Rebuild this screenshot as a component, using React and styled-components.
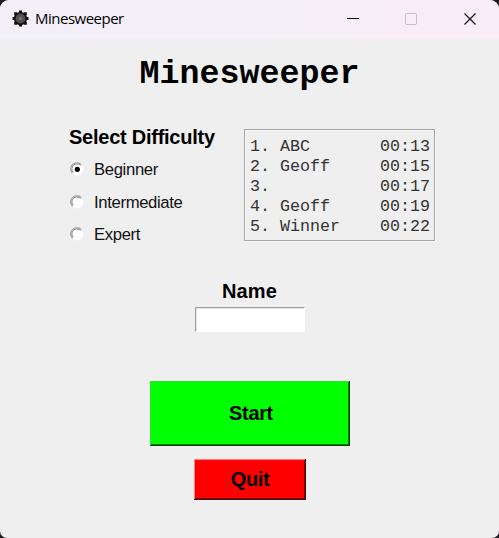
import React, { useState } from "react";
import styled, { createGlobalStyle } from "styled-components";

const GlobalStyle = createGlobalStyle`
  * { box-sizing: border-box; }
  body { margin: 0; background: #1c1a1c; overflow: hidden; }
`;

const Window = styled.div`
  width: 499px;
  height: 538px;
  display: flex;
  flex-direction: column;
  background: #efefef;
  border-radius: 9px 9px 7px 7px;
  overflow: hidden;
  color: #000;
  font-family: "Liberation Sans", Arial, sans-serif;
  font-variant-ligatures: none;
`;

const TitleBar = styled.header`
  height: 38px;
  flex: none;
  display: flex;
  align-items: center;
  padding-left: 12px;
  background: linear-gradient(100deg, #f3eff8 0%, #f4eff8 55%, #f8edf6 78%, #f8edf6 100%);
`;

const IconSlot = styled.div`
  display: flex;
  padding-bottom: 2px;
`;

const Caption = styled.span`
  flex: 1;
  margin-left: 6px;
  padding-bottom: 2px;
  font: 15px/20px "Open Sans", "Noto Sans", sans-serif;
  letter-spacing: -0.5px;
`;

const Controls = styled.div`
  display: flex;
  height: 100%;
`;

const Control = styled.div`
  width: 58.5px;
  display: grid;
  place-items: center;
`;

const Content = styled.main`
  flex: 1;
  display: flex;
  flex-direction: column;
  align-items: center;
`;

const Heading = styled.h1`
  margin: 16px 0 0;
  height: 40px;
  font: bold 33.33px/40px "Liberation Mono", "Courier New", monospace;
`;

const Columns = styled.div`
  width: 100%;
  display: flex;
  align-items: flex-start;
  padding-left: 69px;
  margin-top: 31px;
`;

const Difficulty = styled.div`
  width: 175px;
`;

const Label = styled.div`
  font-size: 20px;
  line-height: 24px;
  font-weight: bold;
  white-space: nowrap;
  letter-spacing: ${(p) => p.$spacing || "-0.25px"};
`;

const Options = styled.div`
  padding-top: 4.5px;
`;

const Option = styled.div`
  height: 32.5px;
  display: flex;
  align-items: center;
  gap: 8px;
  font-size: 16.67px;
  letter-spacing: -0.34px;
  color: #111;
`;

const OptionText = styled.span`
  padding-top: 1px;
`;

const Scores = styled.div`
  width: 191px;
  height: 112px;
  margin-top: 4px;
  padding: 7px 0 0 4px;
  border: 1px solid #a6a6a6;
  box-shadow: inset 1px 1px #fafafa, 1px 1px #fafafa;
`;

const ScoreRow = styled.div`
  display: grid;
  grid-template-columns: 30px 100px 50px;
  height: 20px;
  padding-left: 1px;
  font: 16.67px/20px "Liberation Mono", "Courier New", monospace;
  color: #333;
`;

const NameField = styled.div`
  display: flex;
  flex-direction: column;
  align-items: center;
  margin-top: 27.5px;
`;

const Input = styled.input`
  width: 110px;
  height: 25px;
  margin-top: 4px;
  padding: 0 3px;
  border: 1px solid;
  border-color: #a0a0a0 #fff #fff #a0a0a0;
  box-shadow: inset 1px 1px #e3e3e3;
  border-radius: 0;
  background: #fff;
  outline: none;
  font-size: 16px;
`;

const Button = styled.button`
  width: ${(p) => p.$width}px;
  height: ${(p) => p.$height}px;
  margin: ${(p) => p.$top}px 0 0 ${(p) => p.$left || 0}px;
  padding: 0 ${(p) => p.$padRight || 0}px 0 2px;
  border: 0;
  border-radius: 0;
  background: ${(p) => p.$color};
  box-shadow: inset -1px -1px ${(p) => p.$edge}, inset 1px 1px ${(p) => p.$light},
    inset -2px -2px ${(p) => p.$shade};
  font: bold 20px/24px "Liberation Sans", Arial, sans-serif;
  letter-spacing: -0.35px;
  color: #000;
`;

const MineIcon = () => (
  <svg width="17" height="17" viewBox="0 0 17 17">
    <g fill="#111">
      <path d="M7 .5h3v3H7zM7 13.5h3v3H7zM.5 7h3v3h-3zM13.5 7h3v3h-3z" />
      <path d="M2.2 2.2h3v3h-3zM11.8 2.2h3v3h-3zM2.2 11.8h3v3h-3zM11.8 11.8h3v3h-3z" />
      <circle cx="8.5" cy="8.5" r="6.6" />
    </g>
    <circle cx="8.5" cy="8.5" r="4.9" fill="#505050" />
    <circle cx="8.5" cy="8.5" r="1.8" fill="#777" />
  </svg>
);

const Radio = ({ checked }) => (
  <svg width="17" height="17" viewBox="0 0 17 17">
    <circle cx="8" cy="8" r="6.5" fill="#fff" />
    <path d="M3.4 12.2A6.2 6.2 0 0 1 12.4 3.6" fill="none" stroke="#979797" strokeWidth="1.1" />
    <path d="M4.1 11.3A5.1 5.1 0 0 1 11.5 4.3" fill="none" stroke="#808080" strokeWidth="1" />
    {checked && <circle cx="8.3" cy="8.3" r="2.6" fill="#000" />}
  </svg>
);

const levels = ["Beginner", "Intermediate", "Expert"];
const scores = [
  ["ABC", "00:13"],
  ["Geoff", "00:15"],
  ["", "00:17"],
  ["Geoff", "00:19"],
  ["Winner", "00:22"],
];

export default function App() {
  const [level, setLevel] = useState("Beginner");
  return (
    <>
      <GlobalStyle />
      <Window>
        <TitleBar>
          <IconSlot><MineIcon /></IconSlot>
          <Caption>Minesweeper</Caption>
          <Controls>
            <Control>
              <svg width="12" height="12"><path d="M0 5.5h12" stroke="#000" /></svg>
            </Control>
            <Control>
              <svg width="12" height="12"><rect x=".5" y=".5" width="11" height="11" rx="1" fill="none" stroke="#c3bfc5" /></svg>
            </Control>
            <Control>
              <svg width="12" height="12"><path d="M.5.5l11 11M11.5.5l-11 11" stroke="#111" strokeWidth="1.2" /></svg>
            </Control>
          </Controls>
        </TitleBar>
        <Content>
          <Heading>Minesweeper</Heading>
          <Columns>
            <Difficulty>
              <Label>Select Difficulty</Label>
              <Options>
                {levels.map((name) => (
                  <Option key={name} onClick={() => setLevel(name)}>
                    <Radio checked={level === name} />
                    <OptionText>{name}</OptionText>
                  </Option>
                ))}
              </Options>
            </Difficulty>
            <Scores>
              {scores.map(([name, time], i) => (
                <ScoreRow key={i}>
                  <span>{i + 1}.</span>
                  <span>{name}</span>
                  <span>{time}</span>
                </ScoreRow>
              ))}
            </Scores>
          </Columns>
          <NameField>
            <Label $spacing="0.1px">Name</Label>
            <Input />
          </NameField>
          <Button $width={200} $height={65} $top={49} $left={1} $color="#00ff00" $light="#35df35" $edge="#143c14" $shade="#008500">Start</Button>
          <Button $width={112} $height={41} $top={13} $left={1} $padRight={2} $color="#ff0000" $light="#ff8080" $edge="#3c1414" $shade="#850000">Quit</Button>
        </Content>
      </Window>
    </>
  );
}
